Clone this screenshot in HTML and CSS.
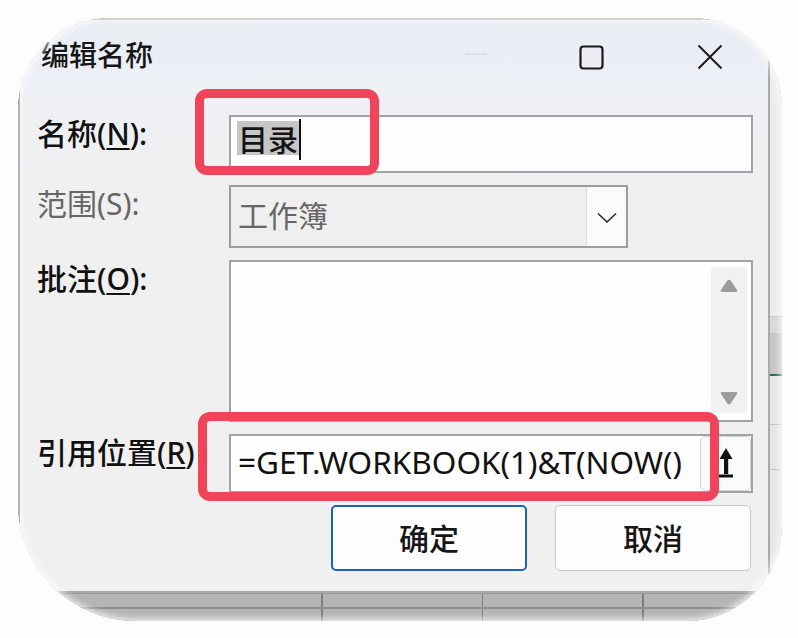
FILE: index.html
```html
<!DOCTYPE html>
<html lang="zh-CN">
<head>
<meta charset="utf-8">
<title>编辑名称</title>
<link rel="stylesheet" href="styles.css">
</head>
<body>
<div class="frame">
  <div class="dialog">
    <div class="titlebar">
      <div class="title">编辑名称</div>
      <div class="controls">
        <div class="ctl ctl-min"><svg width="24" height="4" viewBox="0 0 24 4"><line x1="1" y1="2" x2="23" y2="2" stroke="#cfd2d6" stroke-width="1.2"/></svg></div>
        <div class="ctl ctl-max"><svg width="25" height="25" viewBox="0 0 25 25"><rect x="1.5" y="1.5" width="22" height="22" rx="3" fill="none" stroke="#1a1a1a" stroke-width="2.2"/></svg></div>
        <div class="ctl ctl-close"><svg width="26" height="26" viewBox="0 0 26 26"><path d="M1.5 1.5 L24.5 24.5 M24.5 1.5 L1.5 24.5" stroke="#1a1a1a" stroke-width="2" fill="none"/></svg></div>
      </div>
    </div>

    <div class="form">
      <div class="label">名称(<u>N</u>):</div>
      <div class="field name-field">
        <span class="sel">目录</span><span class="caret"></span>
      </div>

      <div class="label label-dis">范围(S):</div>
      <div class="field combo">
        <span class="combo-text">工作簿</span>
        <span class="combo-btn"><svg width="20" height="12" viewBox="0 0 20 12"><polyline points="1,1.5 10,10 19,1.5" fill="none" stroke="#2a2a2a" stroke-width="1.6"/></svg></span>
      </div>

      <div class="label">批注(<u>O</u>):</div>
      <div class="field memo">
        <div class="vscroll">
          <svg width="18" height="14" viewBox="0 0 18 14"><path d="M7.3 1.6 Q9 -0.3 10.7 1.6 L17 11 Q18 13 16 13 L2 13 Q0 13 1 11 Z" fill="#9c9c9c"/></svg>
          <svg width="18" height="14" viewBox="0 0 18 14"><path d="M7.3 12.4 Q9 14.3 10.7 12.4 L17 3 Q18 1 16 1 L2 1 Q0 1 1 3 Z" fill="#9c9c9c"/></svg>
        </div>
      </div>

      <div class="label">引用位置(<u>R</u>)</div>
      <div class="field refers">
        <span class="ref-text">=GET.WORKBOOK(1)&amp;T(NOW()</span>
        <span class="collapse-btn"><svg width="18" height="36" viewBox="0 0 18 36"><path d="M2.5 13 L9 2 L15.5 13 Z" fill="#111"/><rect x="7" y="12" width="4.2" height="16" fill="#111"/><rect x="2" y="28.5" width="14" height="3" fill="#111"/></svg></span>
      </div>

      <div class="buttons">
        <div class="btn btn-ok">确定</div>
        <div class="btn">取消</div>
      </div>
    </div>

    <div class="mark mark-name"></div>
    <div class="mark mark-ref"></div>
  </div>

  <div class="sheet-right">
    <div class="cell c1"></div>
    <div class="cell c2"></div>
    <div class="cell c3"></div>
    <div class="cell c4"></div>
    <div class="cell c5"></div>
    <div class="cell c6"></div>
  </div>
  <div class="sheet-bottom"></div>
</div>
</body>
</html>
```

FILE: styles.css
```css
* { box-sizing: border-box; }

html, body { margin: 0; padding: 0; }

body {
  background: #fdfdfe;
  padding: 18px 0 0 18px;
  font-family: "Noto Sans", "Noto Sans CJK SC", sans-serif;
  color: #161616;
}

.frame {
  position: relative;
  width: 764px;
  height: 603px;
  border-radius: 92px 90px 96px 118px;
  overflow: hidden;
  display: grid;
  grid-template-columns: 752px 12px;
  grid-template-rows: 575px 28px;
  background: #b5b5b6;
}

.frame::after {
  content: "";
  position: absolute;
  inset: 0;
  border-radius: inherit;
  box-shadow: inset 0 0 6px 2px rgba(255, 255, 255, 0.8);
  pointer-events: none;
}

.dialog {
  grid-column: 1;
  grid-row: 1;
  position: relative;
  display: flex;
  flex-direction: column;
  border: 2px solid #a9a9ab;
  border-left-color: #6f6f70;
  background: linear-gradient(180deg, #e9edf4 0px, #edf0f5 70px, #f0f0f2 130px, #f0f0f0 200px);
}

/* title bar */
.titlebar {
  height: 95px;
  display: flex;
  align-items: flex-start;
  justify-content: space-between;
}

.title {
  padding: 20px 0 0 21px;
  font-size: 28px;
  line-height: 28px;
  font-weight: 500;
  color: #161616;
  font-family: "Noto Sans CJK SC", sans-serif;
}

.controls {
  display: flex;
  padding-top: 24px;
}

.ctl {
  height: 26px;
  display: flex;
  align-items: center;
  justify-content: center;
}
.ctl-min { width: 110px; align-items: flex-start; padding-top: 8px; }
.ctl-max { width: 121px; }
.ctl-close { width: 116px; }

/* form */
.form {
  display: grid;
  grid-template-columns: 192px 1fr;
  grid-auto-rows: auto;
  row-gap: 12px;
  padding: 0 15px 0 17px;
}

.label {
  font-size: 30px;
  line-height: 38px;
  font-weight: 500;
  color: #111;
  white-space: nowrap;
}
.label u { text-underline-offset: 3px; text-decoration-thickness: 2px; }
.label-dis { color: #666; font-weight: 400; }

.field {
  border: 2px solid #a2a2a4;
  background: #fefefe;
}

.name-field {
  height: 58px;
  display: flex;
  align-items: flex-start;
  padding: 2px 0 0 6px;
}
.sel {
  background: #c6c6c7;
  font-size: 30px;
  line-height: 34px;
  height: 34px;
  margin-top: 2px;
  padding: 0 1px;
  color: #151515;
  font-weight: 500;
  font-family: "Noto Sans CJK SC", sans-serif;
}
.caret {
  width: 2px;
  height: 41px;
  background: #111;
}

.combo {
  height: 63px;
  width: 399px;
  display: flex;
  align-items: stretch;
  background: #efeff0;
  border-color: #9d9d9f;
}
.combo-text {
  flex: 1;
  display: flex;
  align-items: center;
  padding: 0 0 5px 7px;
  font-size: 30px;
  color: #666;
  font-family: "Noto Sans CJK SC", sans-serif;
}
.combo-btn {
  width: 40px;
  display: flex;
  align-items: center;
  justify-content: center;
  background: #fbfbfb;
  border-left: 1px solid #dcdcdc;
  padding-top: 2px;
}

.memo {
  height: 162px;
  display: flex;
  justify-content: flex-end;
}
.vscroll {
  width: 36px;
  margin: 5px 4px 7px 0;
  background: #f1f1f2;
  display: flex;
  flex-direction: column;
  align-items: center;
  justify-content: space-between;
  padding: 12px 0 8px;
}

.refers {
  height: 59px;
  display: flex;
  align-items: center;
  justify-content: space-between;
  padding: 1px 0 1px 7px;
}
.ref-text {
  white-space: nowrap;
  font-size: 31.5px;
  line-height: 40px;
  color: #111;
  padding-bottom: 4px;
}
.collapse-btn {
  flex: none;
  width: 51px;
  height: 55px;
  display: flex;
  align-items: center;
  justify-content: center;
  border: 1px solid #d3d3d3;
  border-radius: 5px;
  background: #fbfbfb;
}

.buttons {
  grid-column: 1 / span 2;
  display: flex;
  justify-content: flex-end;
  gap: 28px;
  padding-right: 2px;
}
.btn {
  width: 196px;
  height: 66px;
  display: flex;
  align-items: center;
  justify-content: center;
  border: 1px solid #c8c8ca;
  border-radius: 5px;
  background: #fdfdfd;
  font-size: 30px;
  font-weight: 500;
  color: #161616;
  font-family: "Noto Sans CJK SC", sans-serif;
  padding-bottom: 2px;
}
.btn-ok {
  border: 2px solid #1d64b6;
}

/* red annotation boxes */
.mark {
  position: absolute;
  border: 9px solid #ef4459;
  border-radius: 12px;
  pointer-events: none;
}
.mark-name { left: 175px; top: 69px; width: 184px; height: 86px; }
.mark-ref { left: 178px; top: 392px; width: 521px; height: 89px; }

/* spreadsheet peeking behind */
.sheet-right {
  grid-column: 2;
  grid-row: 1;
  display: flex;
  flex-direction: column;
  background: #e6e6e7;
}
.cell { border-bottom: 1px solid #c2c2c3; }
.c1 { height: 299px; background: #ececed; }
.c2 { height: 17px; background: #d9d9da; }
.c3 { height: 42px; background: #c6c6c7; border-bottom: 2px solid #1f6f45; }
.c4 { height: 49px; }
.c5 { height: 45px; }
.c6 { flex: 1; }

.sheet-bottom {
  grid-column: 1 / span 2;
  grid-row: 2;
  border-top: 1px solid #9a9a9b;
  background-color: #b5b5b6;
  background-image:
    linear-gradient(180deg, transparent 13px, #8f8f90 13px, #8f8f90 15px, transparent 15px),
    repeating-linear-gradient(90deg, transparent 0, transparent 159px, #7e7e7f 159px, #7e7e7f 160.5px);
  background-position: 0 0, 144px 0;
}
```
